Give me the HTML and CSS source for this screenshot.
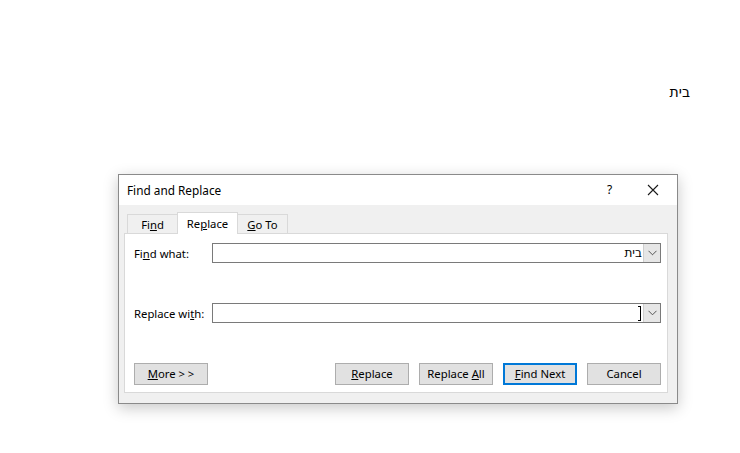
FILE: index.html
```html
<!DOCTYPE html>
<html>
<head>
<meta charset="utf-8">
<link rel="stylesheet" href="styles.css">
</head>
<body>
<div class="doc"><span class="doc-text" dir="rtl">בית</span></div>
<div class="dialog">
  <div class="titlebar">
    <span class="title">Find and Replace</span>
    <span class="help">?</span>
    <span class="close">
      <svg width="12" height="12" viewBox="0 0 12 12"><path d="M1 1L11 11M11 1L1 11" stroke="#1a1a1a" stroke-width="1.1" fill="none"/></svg>
    </span>
  </div>
  <div class="body">
    <div class="tabs">
      <div class="tab">Fi<u>n</u>d</div>
      <div class="tab active">Re<u>p</u>lace</div>
      <div class="tab"><u>G</u>o To</div>
    </div>
    <div class="panel">
      <div class="row">
        <label class="label">Fi<u>n</u>d what:</label>
        <div class="combo">
          <div class="field"><span dir="rtl">בית</span></div>
          <div class="drop"><svg width="9" height="6" viewBox="0 0 9 6"><path d="M0.5 0.8L4.5 4.8L8.5 0.8" stroke="#555" stroke-width="1" fill="none"/></svg></div>
        </div>
      </div>
      <div class="row row2">
        <label class="label">Replace wi<u>t</u>h:</label>
        <div class="combo">
          <div class="field"><span class="caret"></span></div>
          <div class="drop"><svg width="9" height="6" viewBox="0 0 9 6"><path d="M0.5 0.8L4.5 4.8L8.5 0.8" stroke="#555" stroke-width="1" fill="none"/></svg></div>
        </div>
      </div>
      <div class="buttons">
        <button class="btn"><u>M</u>ore &gt; &gt;</button>
        <div class="spacer"></div>
        <button class="btn"><u>R</u>eplace</button>
        <button class="btn">Replace <u>A</u>ll</button>
        <button class="btn default"><u>F</u>ind Next</button>
        <button class="btn">Cancel</button>
      </div>
    </div>
  </div>
</div>
</body>
</html>
```
FILE: styles.css
```css
html, body {
  margin: 0;
  padding: 0;
  background: #ffffff;
}
body {
  width: 740px;
  height: 453px;
  overflow: hidden;
  font-family: "Noto Sans", "Liberation Sans", sans-serif;
  font-size: 11.3px;
  color: #000;
}
u { text-decoration: underline; text-underline-offset: 1px; }

.doc {
  height: 84px;
  padding-top: 83px;
  box-sizing: border-box;
  display: flex;
  justify-content: flex-end;
  padding-right: 50px;
}
.doc-text {
  font-family: "DejaVu Sans", "Liberation Sans", sans-serif;
  font-size: 14px;
  line-height: 18px;
}

.dialog {
  margin-top: 90px;
  margin-left: 118px;
  width: 560px;
  height: 230px;
  box-sizing: border-box;
  border: 1px solid #8a8a8a;
  background: #f0f0f0;
  box-shadow: 0 4px 14px rgba(0,0,0,0.22);
  display: flex;
  flex-direction: column;
}
.titlebar {
  height: 30px;
  background: #ffffff;
  display: flex;
  align-items: center;
  padding-left: 8px;
  padding-bottom: 1px;
  box-sizing: border-box;
  font-size: 11.8px;
}
.title { flex: 1; }
.help { width: 12px; margin-right: 28px; font-size: 12px; }
.close { width: 12px; height: 12px; margin-right: 18px; display: flex; }

.body {
  flex: 1;
  display: flex;
  flex-direction: column;
  padding: 7px 9px 10px 5px;
}
.tabs {
  display: flex;
  height: 21px;
  padding-left: 3px;
  align-items: flex-end;
  position: relative;
  z-index: 1;
}
.tab {
  height: 19px;
  box-sizing: border-box;
  border: 1px solid #d9d9d9;
  border-bottom: none;
  border-right: none;
  line-height: 20px;
  background: #f0f0f0;
  text-align: center;
  padding: 0;
}
.tab:first-child { width: 50px; }
.tab:last-child { border-right: 1px solid #d9d9d9; width: 50px; }
.tab.active {
  height: 22px;
  margin-bottom: -1px;
  background: #ffffff;
  border-right: 1px solid #d9d9d9;
  width: 61px;
  line-height: 21px;
}
.tab.active + .tab { border-left: none; }

.panel {
  flex: 1;
  background: #ffffff;
  border: 1px solid #d9d9d9;
  padding: 9px 6px 7px 9px;
  display: flex;
  flex-direction: column;
}
.row {
  display: flex;
  align-items: center;
  height: 20px;
}
.row2 { margin-top: 40px; }
.label { width: 78px; }
.combo {
  flex: 1;
  display: flex;
  height: 20px;
  box-sizing: border-box;
  border: 1px solid #7a7a7a;
}
.field {
  flex: 1;
  display: flex;
  justify-content: flex-end;
  align-items: center;
  padding-right: 1px;
}
.field span[dir] {
  font-family: "DejaVu Sans", "Liberation Sans", sans-serif;
  font-size: 12px;
}
.caret {
  width: 3px;
  height: 15px;
  border-right: 1px solid #000;
  border-top: 1px solid #000;
  border-bottom: 1px solid #000;
  box-sizing: border-box;
  margin-right: 1px;
}
.drop {
  width: 16px;
  background: #e6e6e6;
  border-left: 1px solid #cfcfcf;
  display: flex;
  align-items: center;
  justify-content: center;
}

.buttons {
  margin-top: auto;
  display: flex;
  gap: 10px;
}
.spacer { flex: 1; }
.btn {
  width: 74px;
  height: 22px;
  box-sizing: border-box;
  background: #e1e1e1;
  border: 1px solid #adadad;
  font-family: inherit;
  font-size: 11.3px;
  color: #000;
  padding: 0 0 2px 0;
}
.btn.default {
  border: 2px solid #0078d7;
}
```
